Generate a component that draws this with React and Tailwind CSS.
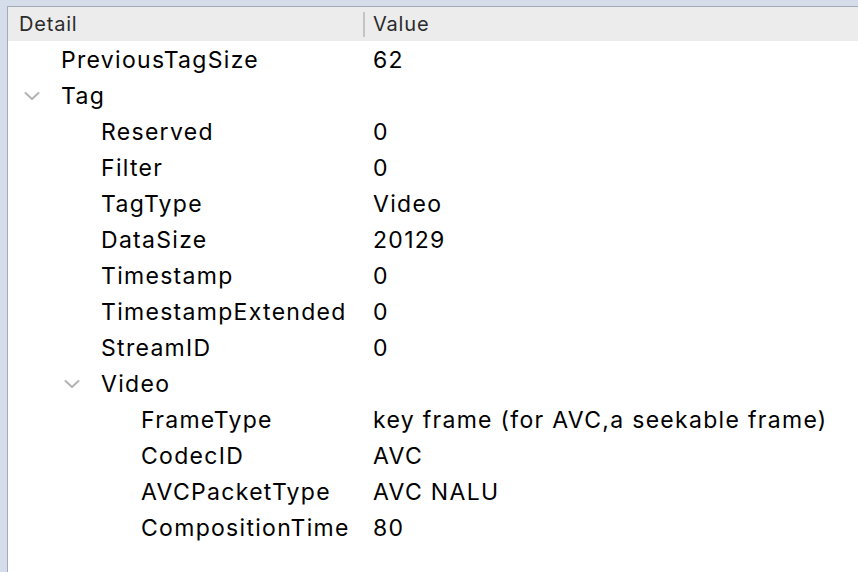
import React from 'react';

const rows = [
  { label: 'PreviousTagSize', value: '62', level: 0 },
  { label: 'Tag', level: 0, open: true },
  { label: 'Reserved', value: '0', level: 1 },
  { label: 'Filter', value: '0', level: 1 },
  { label: 'TagType', value: 'Video', level: 1 },
  { label: 'DataSize', value: '20129', level: 1 },
  { label: 'Timestamp', value: '0', level: 1 },
  { label: 'TimestampExtended', value: '0', level: 1 },
  { label: 'StreamID', value: '0', level: 1 },
  { label: 'Video', level: 1, open: true },
  { label: 'FrameType', value: 'key frame (for AVC,a seekable frame)', level: 2 },
  { label: 'CodecID', value: 'AVC', level: 2 },
  { label: 'AVCPacketType', value: 'AVC NALU', level: 2 },
  { label: 'CompositionTime', value: '80', level: 2 },
];

const indents = ['pl-[53px]', 'pl-[93px]', 'pl-[133px]'];
const chevronPos = ['left-[16px]', 'left-[56px]', 'left-[96px]'];

function Chevron({ level }) {
  return (
    <svg
      className={`absolute top-[13px] ${chevronPos[level]}`}
      width="16"
      height="10"
      viewBox="0 0 16 10"
      fill="none"
    >
      <path d="M1.5 2 L8 8 L14.5 2" stroke="#b3b3b3" strokeWidth="2" strokeLinecap="round" strokeLinejoin="round" />
    </svg>
  );
}

export default function App() {
  return (
    <div className="w-[858px] h-[572px] bg-[#d5dcea] pt-[6px] pl-[7px] overflow-hidden" style={{ fontFamily: 'Inter, "Liberation Sans", sans-serif' }}>
      <div className="h-full bg-white border-t border-l border-[#a3abbb]">
        <div className="flex h-[34px] items-center bg-[#ececec] text-[20px] tracking-[0.8px] text-[#2b2b2b]">
          <div className="w-[355px] pl-[11px]">Detail</div>
          <div className="w-[2px] h-[25px] bg-[#c4c4c4]" />
          <div className="pl-[8px]">Value</div>
        </div>
        <div className="pt-[1px] text-[23px] tracking-[1.3px] text-black">
          {rows.map((r) => (
            <div key={r.label} className="relative flex h-[36px] items-center">
              {r.open && <Chevron level={r.level} />}
              <div className={`w-[365px] ${indents[r.level]} whitespace-nowrap`}>{r.label}</div>
              <div className="whitespace-nowrap">{r.value}</div>
            </div>
          ))}
        </div>
      </div>
    </div>
  );
}
